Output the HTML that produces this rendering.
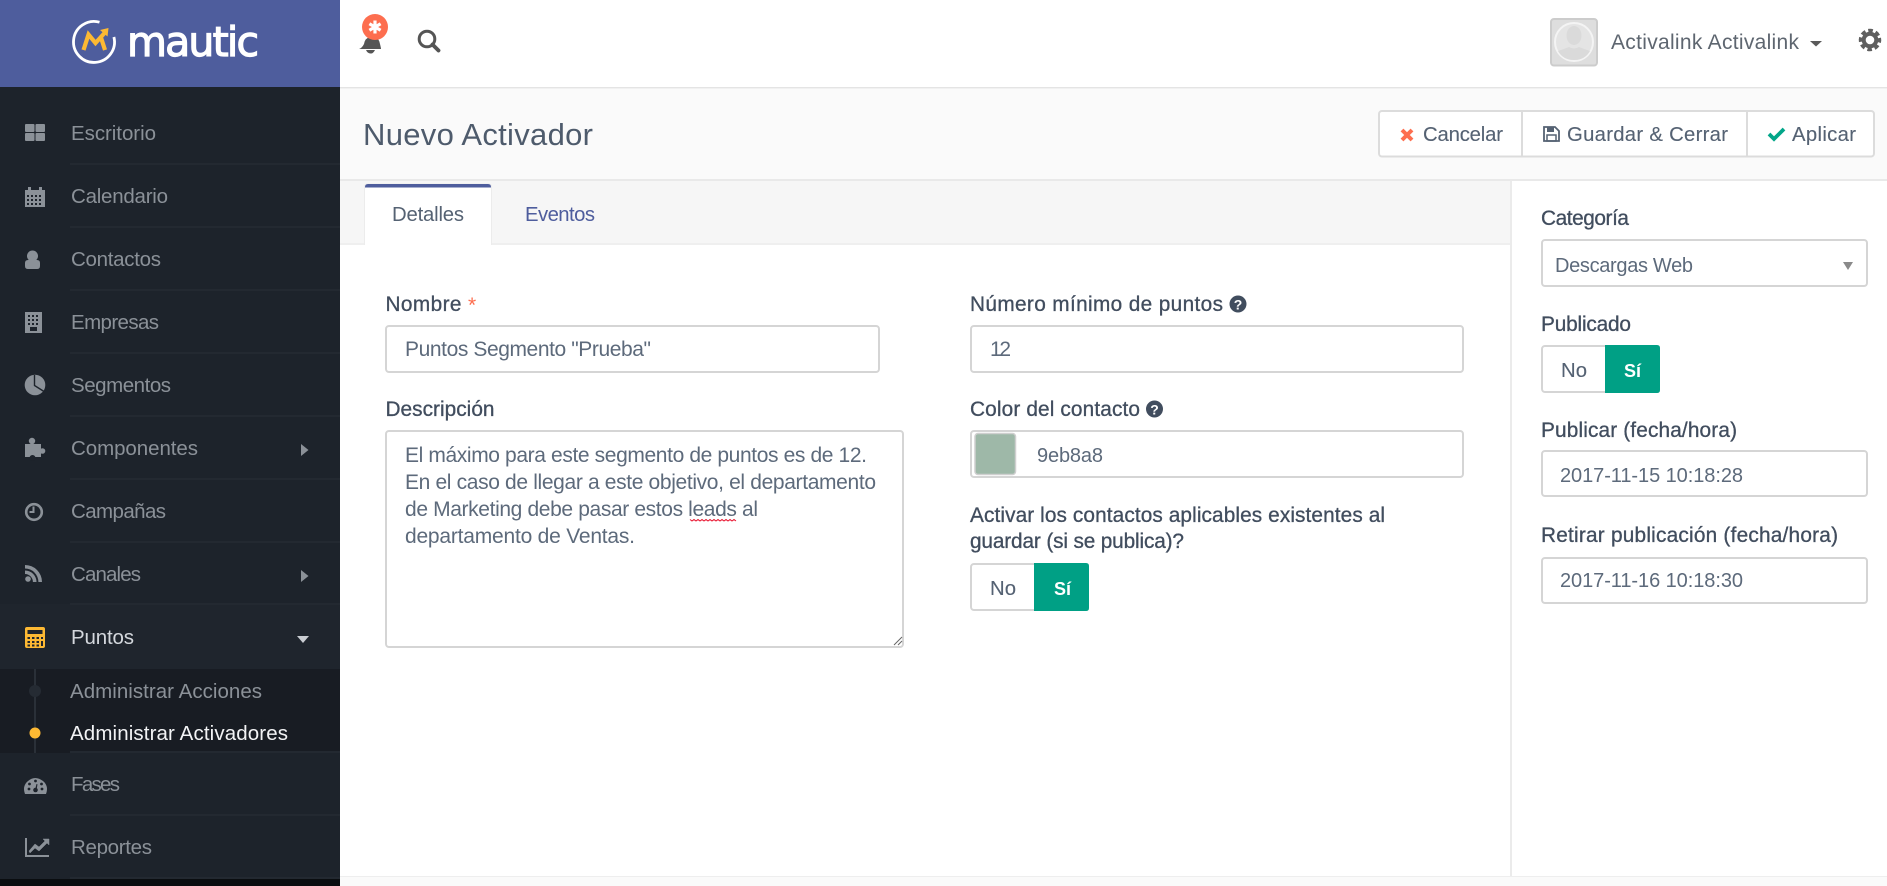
<!DOCTYPE html>
<html lang="es"><head><meta charset="utf-8"><title>Nuevo Activador - Mautic</title>
<style>
html,body{margin:0;padding:0;width:1887px;height:886px;overflow:hidden;background:#fff}
svg{display:block}
text{font-family:"Liberation Sans",Arial,sans-serif;font-size:20.3px;white-space:pre}
.n{font-size:20.5px;fill:#8b9198}
.lb{font-size:20.8px;fill:#414d5e;stroke:#414d5e;stroke-width:.3px}
.v{font-size:21px;fill:#5d6a7b}
.d{font-size:20px;fill:#5d6a7b}
.bt{fill:#556273;stroke:#556273;stroke-width:.12px}
.si{font-size:18px;font-weight:bold;fill:#fff}
.bx{fill:#fff;stroke:#d5d5d5;stroke-width:2}
.ic{fill:#8b9198}
</style></head><body>
<svg width="1887" height="886" viewBox="0 0 1887 886" xmlns="http://www.w3.org/2000/svg">
<!-- backgrounds -->
<rect width="1887" height="886" fill="#fff"/>
<rect x="340" y="88" width="1547" height="91" fill="#fafafa"/>
<rect x="340" y="179" width="1547" height="2" fill="#e9e9e9"/>
<rect x="340" y="181" width="1170" height="63" fill="#f6f6f6"/>
<rect x="340" y="243" width="1170" height="2" fill="#efefef"/>
<rect x="1510" y="181" width="2" height="695" fill="#ebebeb"/>
<rect x="340" y="876" width="1547" height="10" fill="#fafafa"/>
<rect x="340" y="876" width="1547" height="1" fill="#eeeeee"/>
<rect x="340" y="87" width="1547" height="1" fill="#e4e4e4"/>
<rect x="340" y="88" width="1547" height="1" fill="#f1f1f1"/>

<!-- sidebar -->
<rect width="340" height="886" fill="#1d232b"/>
<rect width="340" height="87" fill="#4e5d9d"/>
<rect y="604" width="340" height="65" fill="#1f252d"/>
<rect y="669" width="340" height="84" fill="#181c23"/>
<rect y="879" width="340" height="7" fill="#0a0d10"/>
<g fill="#232931">
<rect x="70" y="163" width="270" height="2"/><rect x="70" y="226" width="270" height="2"/><rect x="70" y="289" width="270" height="2"/><rect x="70" y="352" width="270" height="2"/><rect x="70" y="415" width="270" height="2"/><rect x="70" y="478" width="270" height="2"/><rect x="70" y="541" width="270" height="2"/><rect x="70" y="603" width="270" height="2"/><rect x="70" y="751" width="270" height="2"/><rect x="70" y="814" width="270" height="2"/><rect x="70" y="877" width="270" height="2"/>
</g>

<!-- logo -->
<path d="M99.5 22.200A20.500 20.500 0 1 0 113.900 37" fill="none" stroke="#fff" stroke-width="2.800"/>
<path d="M83.500 50L88.500 34.500L95.500 43L105 32.500M100.500 36L105 50" fill="none" stroke="#fdb933" stroke-width="4.200"/>
<path d="M100 30L108.500 28L107.500 36.500Z" fill="#fdb933"/>
<text x="127" y="56" textLength="132" lengthAdjust="spacing" style="font-family:'DejaVu Sans',sans-serif;font-size:41px;fill:#fff;stroke:#fff;stroke-width:1.200px">mautic</text>

<!-- sidebar icons -->
<g class="ic">
<rect x="25" y="124" width="9.500" height="8" rx="1"/><rect x="35.500" y="124" width="9.500" height="8" rx="1"/><rect x="25" y="133" width="9.500" height="8" rx="1"/><rect x="35.500" y="133" width="9.500" height="8" rx="1"/>
<path fill-rule="evenodd" d="M25 190h3v-3h3v3h8v-3h3v3h3v17H25zM27 195v2h2v-2zM31 195v2h2v-2zM35 195v2h2v-2zM39 195v2h2v-2zM27 199v2h2v-2zM31 199v2h2v-2zM35 199v2h2v-2zM39 199v2h2v-2zM27 203v2h2v-2zM31 203v2h2v-2zM35 203v2h2v-2zM39 203v2h2v-2z"/>
<circle cx="32.500" cy="256" r="5.500"/><path d="M25 263q0-3 3-3h9q3 0 3 3v3q0 3-3 3h-9q-3 0-3-3z"/>
<path fill-rule="evenodd" d="M25 312h17v21H25zM28 315v2h2v-2zM32 315v2h2v-2zM36 315v2h2v-2zM28 319v2h2v-2zM32 319v2h2v-2zM36 319v2h2v-2zM28 323v2h2v-2zM32 323v2h2v-2zM36 323v2h2v-2zM30 327v4h7v-4z"/>
<circle cx="35" cy="385" r="10.300"/>
<path d="M34.500 375v10.500L44 391.500" fill="none" stroke="#1d232b" stroke-width="1.400"/>
<rect x="25" y="444" width="16" height="13"/>
<circle cx="32" cy="441" r="3.200"/><rect x="30.500" y="442" width="3" height="3"/>
<circle cx="42.500" cy="451" r="2.800"/>
<circle cx="32.500" cy="458" r="3" fill="#1d232b"/>
<circle cx="34" cy="512" r="7.800" fill="none" stroke="#8b9198" stroke-width="2.600"/><path d="M34.500 506.500v6.500h-5v-2h3v-4.500z"/>
<circle cx="28" cy="579" r="2.800"/><path d="M25 570.500A11.500 11.500 0 0 1 36.500 582h-3.600A8 8 0 0 0 25 574z"/><path d="M25 565A17 17 0 0 1 42 582h-3.600A13.500 13.500 0 0 0 25 568.500z"/>
<path d="M25 794q-3-8 3-13q7-6 15 0q6 5 3 13z"/>
<path d="M25 838h2v17h22v2H25z"/><path d="M29 851l6-7 4 3 6-6-2-2h6v6l-2-2-8 8-4-3-5 5z" stroke="#8b9198" stroke-width=".5"/>
</g>
<g fill="#1d232b">
<circle cx="29" cy="789" r="1.400"/><circle cx="29.500" cy="784" r="1.400"/><circle cx="35.500" cy="781" r="1.400"/><circle cx="41.500" cy="784" r="1.400"/><circle cx="42" cy="789" r="1.400"/>
<circle cx="35.500" cy="790" r="2.300"/><path d="M35 790l1.500-6 1 .3-1 6z"/>
</g>
<path fill-rule="evenodd" fill="#fdb933" d="M25 629q0-2 2-2h16q2 0 2 2v17q0 2-2 2H27q-2 0-2-2zM27.500 630v4h15v-4zM27.500 637v2h2.500v-2zM32 637v2h2.500v-2zM36.500 637v2h2.500v-2zM41 637v2h2v-2zM27.500 641v2h2.500v-2zM32 641v2h2.500v-2zM36.500 641v2h2.500v-2zM41 641v5h2v-5zM27.500 644.500v2h2.500v-2zM32 644.500v2h2.500v-2zM36.500 644.500v2h2.500v-2z"/>

<!-- sidebar text -->
<text class="n" x="71" y="140" textLength="85" lengthAdjust="spacing">Escritorio</text>
<text class="n" x="71" y="203" textLength="97" lengthAdjust="spacing">Calendario</text>
<text class="n" x="71" y="266" textLength="90" lengthAdjust="spacing">Contactos</text>
<text class="n" x="71" y="329" textLength="88" lengthAdjust="spacing">Empresas</text>
<text class="n" x="71" y="392" textLength="100" lengthAdjust="spacing">Segmentos</text>
<text class="n" x="71" y="455" textLength="127" lengthAdjust="spacing">Componentes</text>
<text class="n" x="71" y="518" textLength="95" lengthAdjust="spacing">Campañas</text>
<text class="n" x="71" y="581" textLength="70" lengthAdjust="spacing">Canales</text>
<text class="n" x="71" y="644" textLength="63" lengthAdjust="spacing" style="fill:#d4d8dd">Puntos</text>
<text class="n" x="70" y="698" textLength="192" lengthAdjust="spacing">Administrar Acciones</text>
<text class="n" x="70" y="740" textLength="218" lengthAdjust="spacing" style="fill:#f2f3f5">Administrar Activadores</text>
<text class="n" x="71" y="791" textLength="49" lengthAdjust="spacing">Fases</text>
<text class="n" x="71" y="854" textLength="81" lengthAdjust="spacing">Reportes</text>

<path d="M301 444l7.500 6-7.500 6z" fill="#8b9198"/>
<path d="M301 570l7.500 6-7.500 6z" fill="#8b9198"/>
<path d="M297 636h12l-6 7z" fill="#c9cdd2"/>
<rect x="34" y="669" width="2" height="84" fill="#2a3038"/>
<circle cx="35" cy="691" r="6" fill="#252b33"/>
<circle cx="35" cy="733" r="5.500" fill="#fdb933"/>

<!-- topbar -->
<path d="M359 49q3-1 5-5q1-6 6-7l1-2q3 0 3 2q5 1 6 7q1 4 1 5zM366 50h9q-2 4-4.500 3.500q-3 0-4.500-3.500z" fill="#555"/>
<circle cx="375" cy="27" r="13" fill="#fd6e4f"/>
<path d="M375 20.500v13M369.400 23.700l11.200 6.600M369.400 30.300l11.200-6.600" stroke="#fff" stroke-width="3.200" fill="none"/>
<circle cx="427" cy="39" r="7.800" fill="none" stroke="#555" stroke-width="3"/>
<path d="M432.500 44.500L438.500 50.500" stroke="#555" stroke-width="3.800" stroke-linecap="round"/>

<rect x="1551" y="19" width="46" height="46.500" rx="3" fill="#dedede" stroke="#ccc" stroke-width="2"/>
<circle cx="1574" cy="42" r="19" fill="#e4e4e4" stroke="#f4f4f4" stroke-width="2"/>
<ellipse cx="1574" cy="35.500" rx="7.500" ry="9.500" fill="#dadada"/>
<path d="M1558 51q6-2 11-4q5 3 10 0q5 2 11 4q-5 9-16 9t-16-9z" fill="#dadada"/>
<text x="1611" y="49" textLength="188" lengthAdjust="spacing" style="fill:#5e6670;font-size:21px">Activalink Activalink</text>
<path d="M1810 41h12l-6 5.500z" fill="#5a5a5a"/>
<circle cx="1870" cy="40" r="6.300" fill="none" stroke="#5f5f5f" stroke-width="4"/>
<circle cx="1870" cy="40" r="9.500" fill="none" stroke="#5f5f5f" stroke-width="3.500" stroke-dasharray="4.500 2.960" transform="rotate(-12 1870 40)"/>

<!-- title & buttons -->
<text x="363" y="145" textLength="230" lengthAdjust="spacing" style="font-size:31px;fill:#4e5b6c">Nuevo Activador</text>
<rect x="1379" y="111" width="495" height="45.500" rx="3" fill="#fff" stroke="#dcdcdc" stroke-width="2"/>
<rect x="1521" y="111" width="2" height="46" fill="#dcdcdc"/>
<rect x="1746" y="111" width="2" height="46" fill="#dcdcdc"/>
<path d="M1402 130l10 10M1412 130l-10 10" stroke="#fd6e4f" stroke-width="4" fill="none"/>
<text class="bt" x="1423" y="141" textLength="80" lengthAdjust="spacing">Cancelar</text>
<path d="M1544 127h11l4 4V141h-15z" fill="none" stroke="#556273" stroke-width="1.800"/>
<rect x="1547" y="127" width="7" height="5" fill="#556273"/>
<rect x="1547" y="135" width="9" height="6" fill="none" stroke="#556273" stroke-width="1.500"/>
<text class="bt" x="1567" y="141" textLength="161" lengthAdjust="spacing">Guardar &amp; Cerrar</text>
<path d="M1769 134l5 5 10-10" stroke="#02a689" stroke-width="3.800" fill="none"/>
<text class="bt" x="1792" y="141" textLength="64" lengthAdjust="spacing">Aplicar</text>

<!-- tabs -->
<path d="M365 245V187q0-3 3-3h120q3 0 3 3v58z" fill="#fff"/>
<path d="M364.500 245V187q0-3 3-3h121q3 0 3 3v58" fill="none" stroke="#ececec" stroke-width="1"/>
<path d="M365 187q0-3 3-3h120q3 0 3 3v.5H365z" fill="#4e5d9d"/>
<text x="392" y="221" textLength="72" lengthAdjust="spacing" style="fill:#556273">Detalles</text>
<text x="525" y="221" textLength="70" lengthAdjust="spacing" style="fill:#4e5d9d">Eventos</text>

<!-- left form -->
<text class="lb" x="385.500" y="311" textLength="76" lengthAdjust="spacing">Nombre</text>
<text x="468" y="312" style="fill:#fd6e4f;font-size:21px">*</text>
<rect class="bx" x="386" y="326" width="493" height="46" rx="3"/>
<text class="v" x="405" y="356" textLength="246" lengthAdjust="spacing">Puntos Segmento "Prueba"</text>
<text class="lb" x="385.500" y="416" textLength="109" lengthAdjust="spacing">Descripción</text>
<rect class="bx" x="386" y="431" width="517" height="216" rx="3"/>
<text class="v" x="405" y="462" textLength="462" lengthAdjust="spacing">El máximo para este segmento de puntos es de 12.</text>
<text class="v" x="405" y="489" textLength="471" lengthAdjust="spacing">En el caso de llegar a este objetivo, el departamento</text>
<text class="v" x="405" y="516" textLength="353" lengthAdjust="spacing">de Marketing debe pasar estos leads al</text>
<text class="v" x="405" y="543" textLength="230" lengthAdjust="spacing">departamento de Ventas.</text>
<path d="M690 519.500l2 1.500 2-1.500 2 1.500 2-1.500 2 1.500 2-1.500 2 1.500 2-1.500 2 1.500 2-1.500 2 1.500 2-1.500 2 1.500 2-1.500 2 1.500 2-1.500 2 1.500 2-1.500 2 1.500 2-1.500 2 1.500 2-1.500 2 1.500" fill="none" stroke="#e8112d" stroke-width="1"/>
<path d="M894 645l8-8M898 645l4-4" stroke="#666" stroke-width="1" fill="none"/>

<!-- middle form -->
<text class="lb" x="970" y="311" textLength="253" lengthAdjust="spacing">Número mínimo de puntos</text>
<circle cx="1238" cy="304" r="8.500" fill="#414d5e"/>
<text x="1238" y="309.500" text-anchor="middle" style="font-size:14px;font-weight:bold;fill:#fff">?</text>
<rect class="bx" x="971" y="326" width="492" height="46" rx="3"/>
<text class="v" x="990" y="356" textLength="21" lengthAdjust="spacing">12</text>
<text class="lb" x="970" y="416" textLength="170" lengthAdjust="spacing">Color del contacto</text>
<circle cx="1154.500" cy="409" r="8.500" fill="#414d5e"/>
<text x="1154.500" y="414.500" text-anchor="middle" style="font-size:14px;font-weight:bold;fill:#fff">?</text>
<rect class="bx" x="971" y="431" width="492" height="46" rx="3"/>
<rect x="975" y="433.500" width="40.500" height="41" rx="3" fill="#9eb8a8" stroke="#cfcfcf" stroke-width="1.500"/>
<text class="d" x="1037" y="462" textLength="66" lengthAdjust="spacing">9eb8a8</text>
<text class="lb" x="970" y="522" textLength="415" lengthAdjust="spacing">Activar los contactos aplicables existentes al</text>
<text class="lb" x="970" y="548" textLength="214" lengthAdjust="spacing">guardar (si se publica)?</text>
<rect class="bx" x="971" y="564" width="117" height="46" rx="3"/>
<path d="M1034 563h52q3 0 3 3v42q0 3-3 3h-52z" fill="#00a085"/>
<text class="bt" x="990" y="595" textLength="26" lengthAdjust="spacing">No</text>
<text class="si" x="1054" y="595">Sí</text>

<!-- right panel -->
<text class="lb" x="1541" y="225" textLength="88" lengthAdjust="spacing">Categoría</text>
<rect class="bx" x="1542" y="240" width="325" height="46" rx="3"/>
<text class="d" x="1555" y="272" textLength="138" lengthAdjust="spacing">Descargas Web</text>
<path d="M1843 262h10l-5 8z" fill="#8a8a8a"/>
<text class="lb" x="1541" y="331" textLength="90" lengthAdjust="spacing">Publicado</text>
<rect class="bx" x="1542" y="346" width="117" height="46" rx="3"/>
<path d="M1605 345h52q3 0 3 3v42q0 3-3 3h-52z" fill="#00a085"/>
<text class="bt" x="1561" y="377" textLength="26" lengthAdjust="spacing">No</text>
<text class="si" x="1624" y="377">Sí</text>
<text class="lb" x="1541" y="437" textLength="196" lengthAdjust="spacing">Publicar (fecha/hora)</text>
<rect class="bx" x="1542" y="451" width="325" height="45" rx="3"/>
<text class="d" x="1560" y="482" textLength="183" lengthAdjust="spacing">2017-11-15 10:18:28</text>
<text class="lb" x="1541" y="542" textLength="297" lengthAdjust="spacing">Retirar publicación (fecha/hora)</text>
<rect class="bx" x="1542" y="558" width="325" height="45" rx="3"/>
<text class="d" x="1560" y="587" textLength="183" lengthAdjust="spacing">2017-11-16 10:18:30</text>
</svg>
</body></html>
